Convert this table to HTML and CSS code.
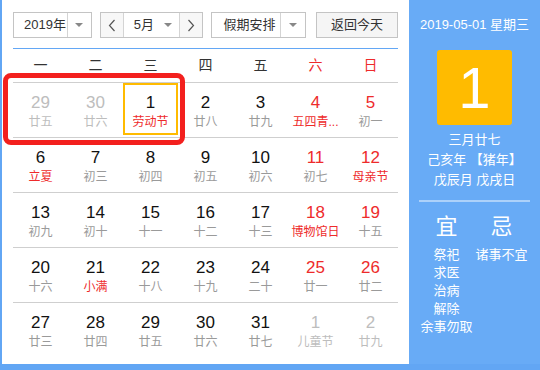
FILE: index.html
```html
<!DOCTYPE html>
<html lang="zh-CN">
<head>
<meta charset="utf-8">
<title>万年历</title>
<link rel="stylesheet" href="styles.css">
</head>
<body>
<div class="widget">
  <div class="main">
    <div class="toolbar">
      <div class="select year"><span class="val">2019年</span><span class="drop"><i class="arrow"></i></span></div>
      <div class="month-group">
        <span class="nav"><svg width="8" height="13" viewBox="0 0 8 13"><polyline points="6.5,1 1.5,6.5 6.5,12" fill="none" stroke="#555" stroke-width="1.2"/></svg></span>
        <span class="month"><span class="val">5月</span><i class="arrow"></i></span>
        <span class="nav"><svg width="8" height="13" viewBox="0 0 8 13"><polyline points="1.5,1 6.5,6.5 1.5,12" fill="none" stroke="#555" stroke-width="1.2"/></svg></span>
      </div>
      <div class="select holiday"><span class="val">假期安排</span><span class="drop"><i class="arrow"></i></span></div>
      <div class="today">返回今天</div>
    </div>
    <div class="weekdays">
      <span>一</span><span>二</span><span>三</span><span>四</span><span>五</span><span class="we">六</span><span class="we">日</span>
    </div>
    <div class="weeks">
      <div class="week">
        <div class="day other"><b>29</b><small>廿五</small></div>
        <div class="day other"><b>30</b><small>廿六</small></div>
        <div class="day sel"><b>1</b><small class="fest">劳动节</small></div>
        <div class="day"><b>2</b><small>廿八</small></div>
        <div class="day"><b>3</b><small>廿九</small></div>
        <div class="day we"><b>4</b><small class="fest">五四青...</small></div>
        <div class="day we"><b>5</b><small>初一</small></div>
      </div>
      <div class="week">
        <div class="day"><b>6</b><small class="fest">立夏</small></div>
        <div class="day"><b>7</b><small>初三</small></div>
        <div class="day"><b>8</b><small>初四</small></div>
        <div class="day"><b>9</b><small>初五</small></div>
        <div class="day"><b>10</b><small>初六</small></div>
        <div class="day we"><b>11</b><small>初七</small></div>
        <div class="day we"><b>12</b><small class="fest">母亲节</small></div>
      </div>
      <div class="week">
        <div class="day"><b>13</b><small>初九</small></div>
        <div class="day"><b>14</b><small>初十</small></div>
        <div class="day"><b>15</b><small>十一</small></div>
        <div class="day"><b>16</b><small>十二</small></div>
        <div class="day"><b>17</b><small>十三</small></div>
        <div class="day we"><b>18</b><small class="fest">博物馆日</small></div>
        <div class="day we"><b>19</b><small>十五</small></div>
      </div>
      <div class="week">
        <div class="day"><b>20</b><small>十六</small></div>
        <div class="day"><b>21</b><small class="fest">小满</small></div>
        <div class="day"><b>22</b><small>十八</small></div>
        <div class="day"><b>23</b><small>十九</small></div>
        <div class="day"><b>24</b><small>二十</small></div>
        <div class="day we"><b>25</b><small>廿一</small></div>
        <div class="day we"><b>26</b><small>廿二</small></div>
      </div>
      <div class="week">
        <div class="day"><b>27</b><small>廿三</small></div>
        <div class="day"><b>28</b><small>廿四</small></div>
        <div class="day"><b>29</b><small>廿五</small></div>
        <div class="day"><b>30</b><small>廿六</small></div>
        <div class="day"><b>31</b><small>廿七</small></div>
        <div class="day other"><b>1</b><small>儿童节</small></div>
        <div class="day other"><b>2</b><small>廿九</small></div>
      </div>
    </div>
  </div>
  <aside class="panel">
    <div class="date">2019-05-01 星期三</div>
    <div class="bigday">1</div>
    <div class="lunar">
      <div>三月廿七</div>
      <div>己亥年 【猪年】</div>
      <div>戊辰月 戊戌日</div>
    </div>
    <div class="divider"></div>
    <div class="yiji">
      <div class="col">
        <div class="title">宜</div>
        <div>祭祀</div>
        <div>求医</div>
        <div>治病</div>
        <div>解除</div>
        <div>余事勿取</div>
      </div>
      <div class="col">
        <div class="title">忌</div>
        <div>诸事不宜</div>
      </div>
    </div>
  </aside>
  <div class="annotation"></div>
</div>
</body>
</html>
```

FILE: styles.css
```css
* { box-sizing: border-box; }

html, body {
  margin: 0;
  padding: 0;
  background: #fff;
}

body {
  font-family: "Liberation Sans", "Noto Sans CJK SC", sans-serif;
  color: #333;
}

.widget {
  position: relative;
  width: 540px;
  height: 370px;
  display: flex;
  border-left: 2px solid #62a6f4;
  border-bottom: 6px solid #62a6f4;
  overflow: hidden;
}

.main {
  width: 407px;
  padding: 12px 11px 0 11px;
  background: #fff;
}

/* toolbar */
.toolbar {
  display: flex;
  height: 37px;
  padding-bottom: 11px;
  border-bottom: 1px solid #63a7f5;
  font-size: 13px;
}

.select {
  display: flex;
  height: 26px;
  border: 1px solid #c4c4c4;
  background: #fff;
}

.select .val {
  flex: 1;
  line-height: 24px;
  padding-left: 10px;
}

.select .drop {
  display: flex;
  align-items: center;
  justify-content: center;
  border-left: 1px solid #d4d4d4;
}

.arrow {
  display: block;
  width: 0;
  height: 0;
  border-left: 4px solid transparent;
  border-right: 4px solid transparent;
  border-top: 4px solid #888;
}

.year { width: 79px; }
.year .drop { width: 24px; }

.month-group {
  display: flex;
  height: 26px;
  margin-left: 8px;
  width: 104px;
  border: 1px solid #c4c4c4;
}

.nav {
  width: 22px;
  display: flex;
  align-items: center;
  justify-content: center;
  background: #f7f7f7;
}

.month {
  flex: 1;
  display: flex;
  align-items: center;
  border-left: 1px solid #d4d4d4;
  border-right: 1px solid #d4d4d4;
  padding: 0 7px 0 10px;
  background: #fff;
}

.month .val { flex: 1; line-height: 24px; }

.holiday {
  width: 95px;
  margin-left: 8px;
}
.holiday .val { padding-left: 11px; }
.holiday .drop { width: 25px; }

.today {
  width: 82px;
  height: 26px;
  margin-left: 10px;
  border: 1px solid #c4c4c4;
  background: #f5f5f5;
  text-align: center;
  line-height: 24px;
}

/* weekday header */
.weekdays {
  display: grid;
  grid-template-columns: repeat(7, 55px);
  height: 33px;
  line-height: 33px;
  font-size: 14px;
  text-align: center;
  color: #333;
}

.weekdays .we { color: #ee2b2b; }

/* day grid */
.week {
  display: grid;
  grid-template-columns: repeat(7, 55px);
  height: 55px;
  border-top: 1px solid #cfcfcf;
}

.week:last-child { border-top-color: #cfcfcf; }

.day {
  height: 52px;
  border: 2px solid transparent;
  padding-top: 8px;
  text-align: center;
}

.day b {
  display: block;
  font-weight: normal;
  font-size: 17px;
  line-height: 20px;
  color: #111;
}

.day small {
  display: block;
  font-size: 12px;
  line-height: 18px;
  color: #9a9a9a;
  white-space: nowrap;
}

.day.we b { color: #ee2b2b; }
.day small.fest { color: #ee2b2b; }

.day.other b { color: #bdbdbd; }
.day.other small { color: #bdbdbd; }

.day.sel { border-color: #ffbb00; }

/* right panel */
.panel {
  flex: 1;
  background: #68abf6;
  color: #fff;
  text-align: center;
  padding-top: 16px;
}

.date {
  font-size: 13px;
  line-height: 18px;
}

.bigday {
  width: 75px;
  height: 75px;
  margin: 16px auto 0;
  background: #ffbb00;
  border-radius: 3px;
  font-size: 58px;
  line-height: 75px;
}

.lunar {
  margin-top: 5px;
  font-size: 13px;
  line-height: 20px;
}

.divider {
  height: 2px;
  margin: 10px 10px 0;
  background: rgba(255, 255, 255, 0.45);
}

.yiji {
  display: grid;
  grid-template-columns: 55px 55px;
  padding: 12px 10px 0;
  font-size: 13px;
  line-height: 18px;
}

.col { display: flex; flex-direction: column; align-items: center; white-space: nowrap; }

.col .title {
  font-size: 22px;
  line-height: 26px;
  margin-bottom: 6px;
}

/* red highlight annotation over the first days */
.annotation {
  position: absolute;
  left: 1px;
  top: 73px;
  width: 182px;
  height: 72px;
  border: 5px solid #f3201e;
  border-radius: 8px;
}
```
